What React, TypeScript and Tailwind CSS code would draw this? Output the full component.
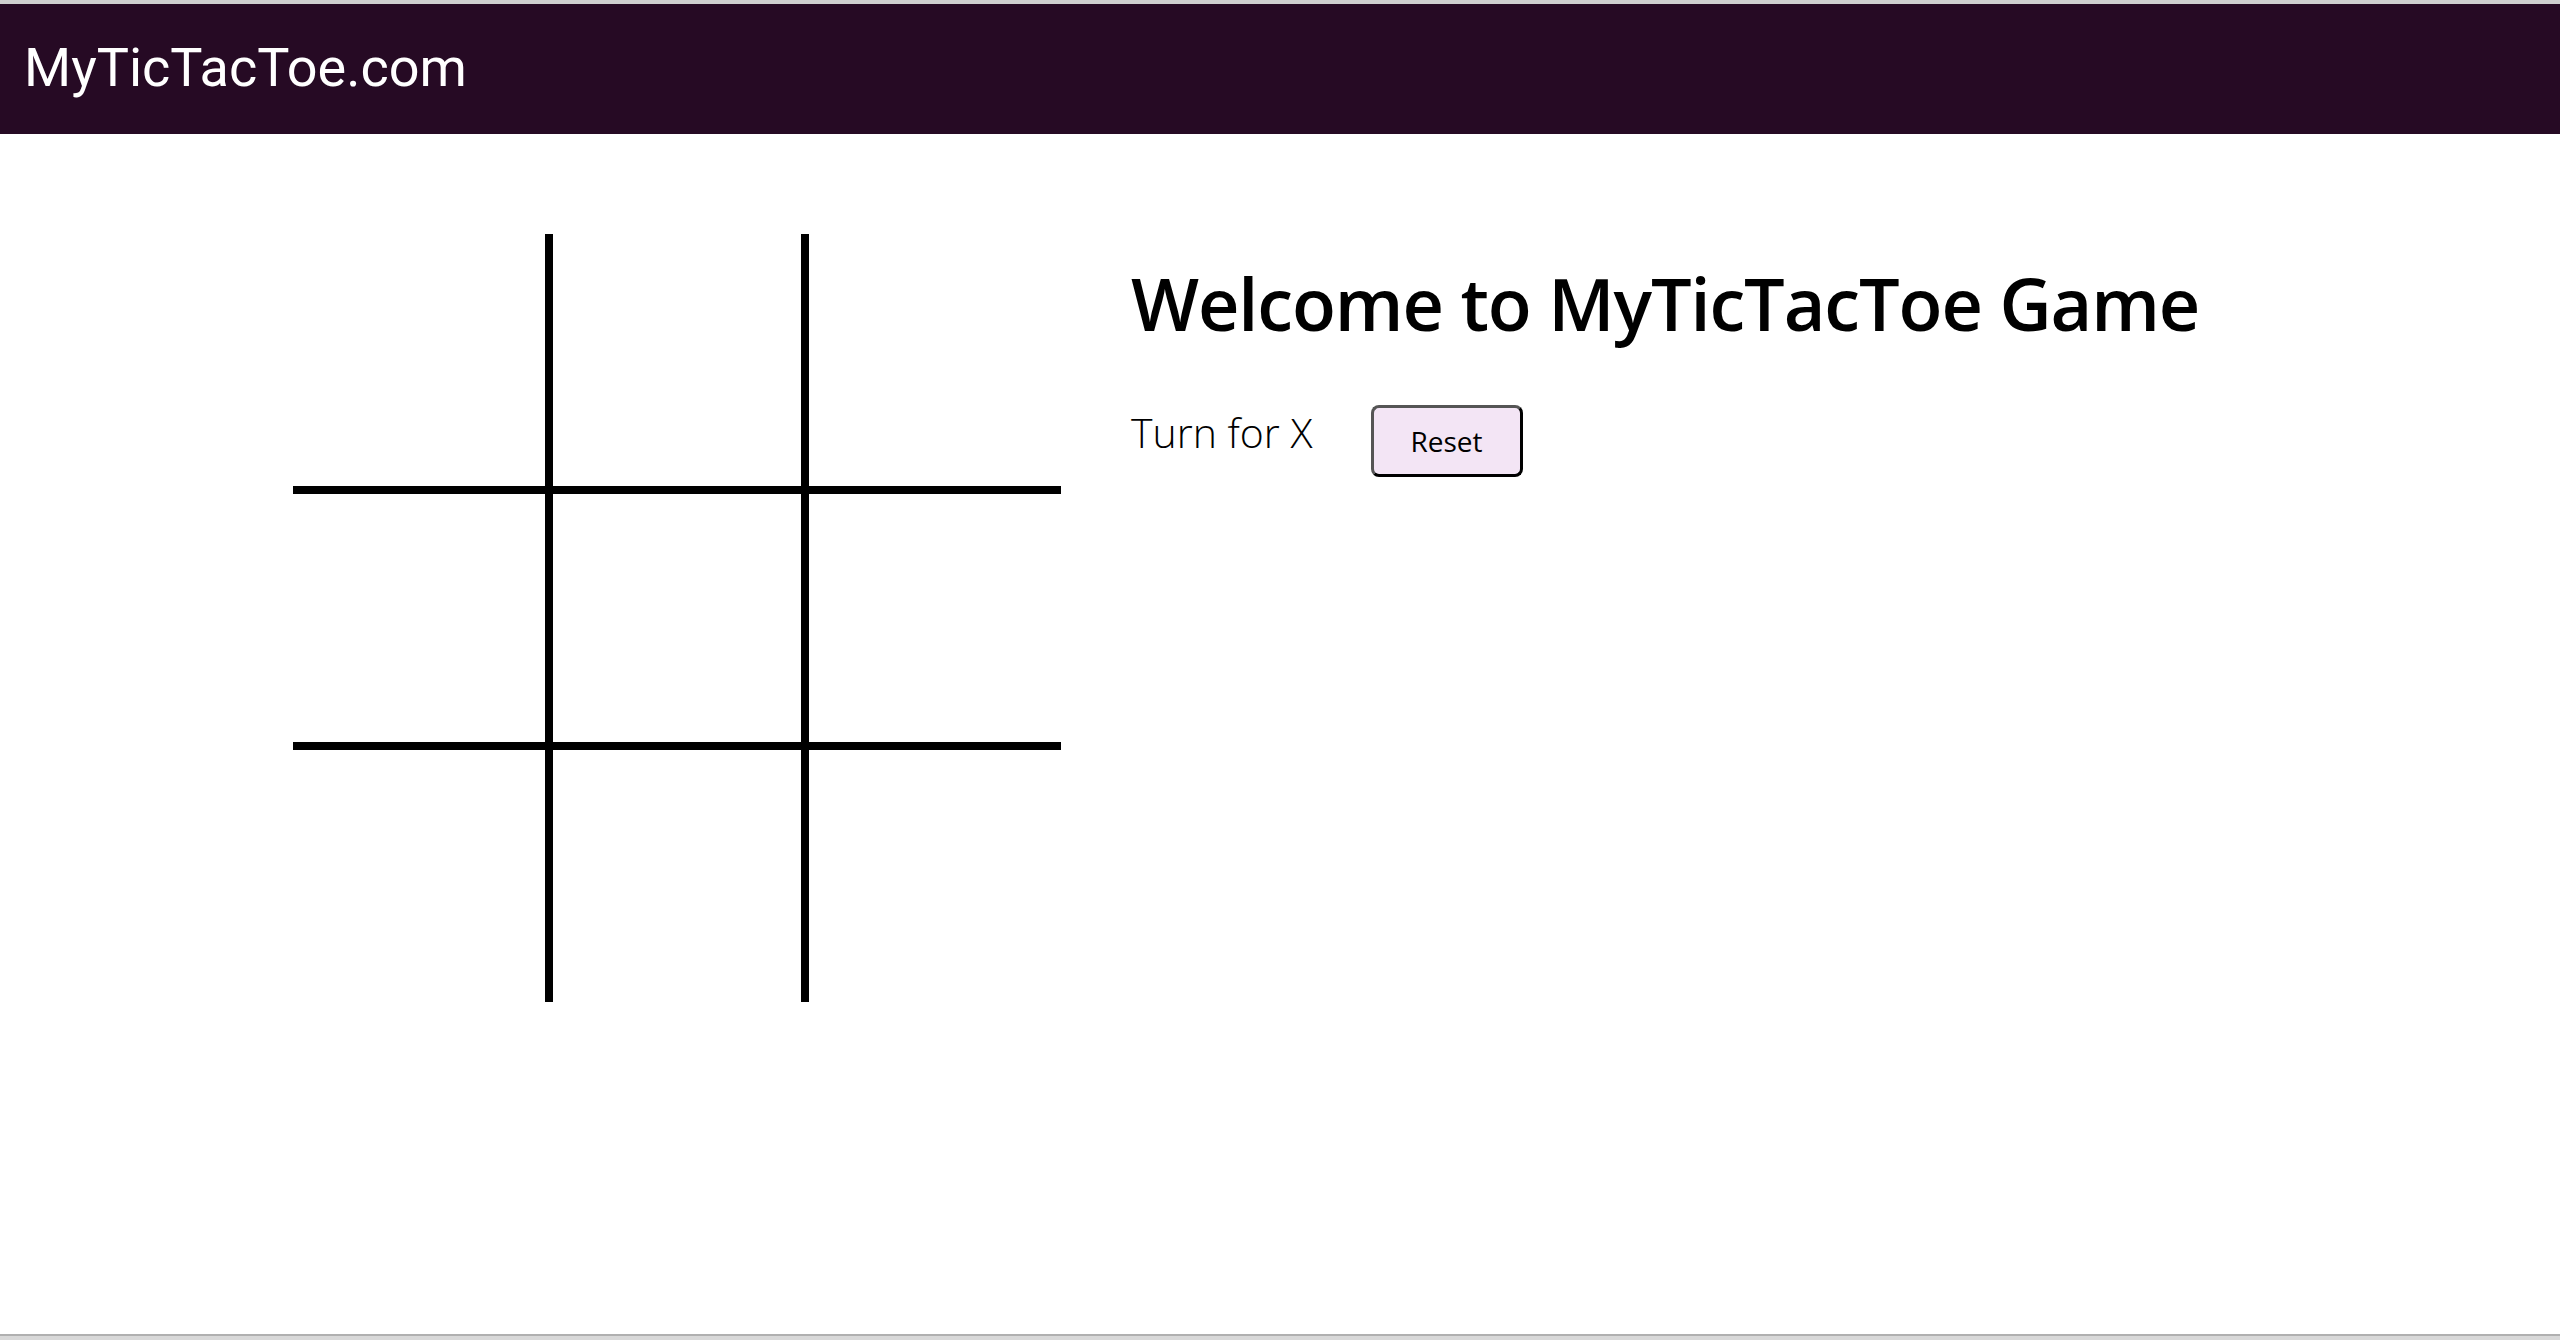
const cellBorders = [
  'border-r-4 border-b-4',
  'border-l-4 border-r-4 border-b-4',
  'border-l-4 border-b-4',
  'border-r-4 border-t-4 border-b-4',
  'border-4',
  'border-l-4 border-t-4 border-b-4',
  'border-r-4 border-t-4',
  'border-l-4 border-r-4 border-t-4',
  'border-l-4 border-t-4',
]

const ubuntuLike = "font-['Open_Sans',sans-serif]"

function Board() {
  return (
    <div className="grid grid-cols-3 w-[768px] h-[768px] shrink-0">
      {cellBorders.map((b, i) => (
        <button key={i} className={`w-[256px] h-[256px] border-black bg-white ${b}`} />
      ))}
    </div>
  )
}

export default function App() {
  return (
    <div className="h-screen flex flex-col bg-white overflow-hidden">
      <div className="h-[4px] bg-[#cfcfcf] shrink-0" />
      <header className="h-[130px] bg-[#260a24] flex items-center px-[24px] shrink-0">
        <span className="text-white text-[54px] leading-none font-['Roboto',sans-serif] pb-[2px]">MyTicTacToe.com</span>
      </header>

      <main className="flex-1 flex items-start pl-[293px] pt-[100px]">
        <Board />
        <div className={`ml-[70px] pt-[33px] ${ubuntuLike}`}>
          <h1 className="text-[72px] leading-[72px] font-semibold text-black tracking-[-1.1px]">
            Welcome to MyTicTacToe Game
          </h1>
          <div className="flex items-start mt-[63px]">
            <span className="text-[41px] leading-[48px] font-light text-black pt-[6px]">Turn for X</span>
            <button className="ml-[58px] mt-[3px] w-[152px] h-[72px] rounded-[8px] border-[3px] border-t-[#555] border-l-[#555] border-b-black border-r-black bg-[#f3e5f5] text-[28px] font-medium text-black">
              Reset
            </button>
          </div>
        </div>
      </main>

      <div className="h-[2px] bg-[#b0b0b0] shrink-0" />
      <div className="h-[4px] bg-[#d8d8d8] shrink-0" />
    </div>
  )
}
